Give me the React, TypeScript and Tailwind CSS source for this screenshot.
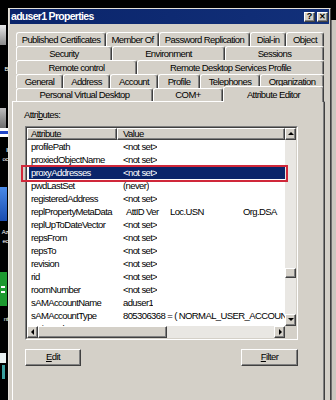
import React from "react";

const FONT = "font-['Liberation_Sans',Arial,sans-serif]";
const T = "text-[9.5px] tracking-[-0.6px]";

const raised =
  "border border-t-white border-l-white border-r-[#404040] border-b-[#404040] shadow-[inset_-1px_-1px_0_#808080]";

const tabRows: { label: string; w: string; active?: boolean }[][] = [
  [
    { label: "Published Certificates", w: "w-[90px]" },
    { label: "Member Of", w: "w-[53px]" },
    { label: "Password Replication", w: "w-[91px]" },
    { label: "Dial-in", w: "w-[36px]" },
    { label: "Object", w: "w-[38px]" },
  ],
  [
    { label: "Security", w: "w-[96px]" },
    { label: "Environment", w: "w-[113px]" },
    { label: "Sessions", w: "w-[99px]" },
  ],
  [
    { label: "Remote control", w: "w-[121px]" },
    { label: "Remote Desktop Services Profile", w: "w-[187px]" },
  ],
  [
    { label: "General", w: "w-[47px]" },
    { label: "Address", w: "w-[47px]" },
    { label: "Account", w: "w-[48px]" },
    { label: "Profile", w: "w-[42px]" },
    { label: "Telephones", w: "w-[60px]" },
    { label: "Organization", w: "w-[64px]" },
  ],
  [
    { label: "Personal Virtual Desktop", w: "w-[137px]" },
    { label: "COM+", w: "w-[70px]" },
    { label: "Attribute Editor", w: "w-[101px]", active: true },
  ],
];

type Row = { name: string; value?: string; selected?: boolean; meta?: boolean };
const rows: Row[] = [
  { name: "profilePath" },
  { name: "proxiedObjectName" },
  { name: "proxyAddresses", selected: true },
  { name: "pwdLastSet", value: "(never)" },
  { name: "registeredAddress" },
  { name: "replPropertyMetaData", meta: true },
  { name: "replUpToDateVector" },
  { name: "repsFrom" },
  { name: "repsTo" },
  { name: "revision" },
  { name: "rid" },
  { name: "roomNumber" },
  { name: "sAMAccountName", value: "aduser1" },
  { name: "sAMAccountType", value: "805306368 = ( NORMAL_USER_ACCOUNT )" },
  { name: "scriptPath" },
];

function Arrow({ dir }: { dir: "up" | "down" | "left" | "right" }) {
  const pts =
    dir === "up"
      ? "1,5 4,2 7,5"
      : dir === "down"
      ? "1,2 4,5 7,2"
      : dir === "left"
      ? "5,1 2,4 5,7"
      : "3,1 6,4 3,7";
  return (
    <svg width="8" height="8" viewBox="0 0 8 8">
      <polygon points={pts} fill="#000" />
    </svg>
  );
}

function ScrollBtn({ dir }: { dir: "up" | "down" | "left" | "right" }) {
  return (
    <div className={`w-[11px] h-[12px] shrink-0 bg-[#d4d0c8] flex items-center justify-center ${raised}`}>
      <Arrow dir={dir} />
    </div>
  );
}

function LeftStrip() {
  return (
    <div className="w-[8px] shrink-0 flex flex-col overflow-hidden text-[6px] leading-[9px] tracking-[-0.4px] text-white">
      <div className="h-[25px] shrink-0" />
      <div className="h-[20px] w-[6px] shrink-0 bg-gradient-to-b from-[#e8e8e8] to-[#8a8a8a]" />
      <div className="h-[20px] shrink-0" />
      <div className="h-[9px] shrink-0 flex justify-end">B</div>
      <div className="h-[34px] shrink-0" />
      <div className="h-[20px] w-[6px] shrink-0 bg-gradient-to-b from-[#bdbdbd] to-[#6e6e6e]" />
      <div className="h-[3px] shrink-0 bg-white" />
      <div className="h-[3px] shrink-0 bg-[#2146c8]" />
      <div className="h-[3px] shrink-0 bg-white" />
      <div className="h-[9px] shrink-0" />
      <div className="h-[9px] shrink-0 flex justify-end">ll</div>
      <div className="h-[9px] shrink-0 flex justify-end">oc</div>
      <div className="h-[23px] shrink-0" />
      <div className="h-[34px] w-[7px] shrink-0 bg-gradient-to-b from-[#4a8ae8] to-[#1a4cb0]" />
      <div className="h-[7px] shrink-0" />
      <div className="h-[9px] shrink-0 flex justify-end">Az</div>
      <div className="h-[9px] shrink-0 flex justify-end">ec</div>
      <div className="h-[26px] shrink-0" />
      <div className="h-[34px] w-[7px] shrink-0 bg-[#1e9a30] flex flex-col justify-center gap-[3px] pl-px">
        <div className="h-[2px] w-[4px] bg-white" />
        <div className="h-[2px] w-[4px] bg-white" />
      </div>
      <div className="h-[9px] shrink-0" />
      <div className="h-[9px] shrink-0 flex justify-end">nt</div>
      <div className="h-[29px] shrink-0" />
      <div className="h-[30px] w-[6px] shrink-0 flex flex-col gap-[2px]">
        <div className="h-[10px] bg-[#e8f0f0]" />
        <div className="h-[14px] w-[3px] ml-[2px] bg-[#3aa0a0]" />
      </div>
    </div>
  );
}

export default function App() {
  return (
    <div className={`relative w-[336px] h-[400px] bg-black flex overflow-hidden ${FONT} text-black`}>
      <LeftStrip />
      <div className="w-[323px] shrink-0 flex flex-col">
        <div className="h-[8px] shrink-0" />
        <div className="flex-1 flex flex-col bg-[#d4d0c8] border-l border-t border-r border-l-[#e4e1da] border-t-[#e4e1da] border-r-[#404040] px-px">
          {/* Title bar */}
          <div className="h-[15px] shrink-0 bg-gradient-to-r from-[#0a246a] to-[#12307a] flex items-center justify-between pl-[1px] pr-[1px]">
            <span className="text-white font-bold text-[10.5px] tracking-[-0.7px] leading-none">aduser1 Properties</span>
            <div className="flex gap-[2px]">
              <div className={`w-[11px] h-[10px] bg-[#d4d0c8] flex items-center justify-center text-[9px] font-bold leading-none ${raised}`}>?</div>
              <div className={`w-[11px] h-[10px] bg-[#d4d0c8] flex items-center justify-center text-[8px] font-bold leading-none ${raised}`}>✕</div>
            </div>
          </div>

          {/* Tabs */}
          <div className="pt-[8px] flex flex-col">
            {tabRows.map((row, ri) => (
              <div
                key={ri}
                className={`ml-[6px] w-[308px] flex items-end ${ri === 4 ? "h-[13px]" : "h-[14px]"}`}
              >
                {row.map((t) =>
                  t.active ? (
                    <div
                      key={t.label}
                      className={`${t.w} h-[16px] -mb-px relative z-10 bg-[#d4d0c8] flex items-start justify-center pt-[2px] ${T} leading-[11px] border-t border-l border-r border-t-white border-l-white border-r-[#404040] rounded-t-[3px] shadow-[inset_-1px_0_0_#808080]`}
                    >
                      {t.label}
                    </div>
                  ) : (
                    <div
                      key={t.label}
                      className={`${t.w} h-full flex items-center justify-center ${T} leading-none whitespace-nowrap border-t border-l border-r border-t-white border-l-white border-r-[#404040] rounded-t-[3px] shadow-[inset_-1px_0_0_#808080]`}
                    >
                      {t.label}
                    </div>
                  )
                )}
              </div>
            ))}
          </div>

          {/* Panel */}
          <div className="ml-[2px] w-[313px] flex-1 flex flex-col border-t border-l border-r border-t-white border-l-white border-r-[#404040] shadow-[inset_-1px_0_0_#808080] pt-[7px] pl-[11px]">
            <div className={`h-[12px] ${T} leading-[12px]`}>
              Attri<span className="underline">b</span>utes:
            </div>
            <div className="mt-[5px] ml-px w-[273px] h-[214px] border border-t-[#808080] border-l-[#808080] border-r-white border-b-white">
              <div className="w-full h-full border border-t-[#404040] border-l-[#404040] border-r-[#d4d0c8] border-b-[#d4d0c8] bg-white flex">
                {/* main */}
                <div className="w-[258px] flex flex-col">
                  <div className={`h-[12px] shrink-0 flex ${T} leading-none`}>
                    <div className={`w-[90px] bg-[#d4d0c8] flex items-center pl-[3px] ${raised}`}>Attribute</div>
                    <div className={`flex-1 bg-[#d4d0c8] flex items-center pl-[5px] ${raised}`}>Value</div>
                  </div>
                  <div className="flex-1 overflow-hidden">
                    {rows.map((r) => (
                      <div
                        key={r.name}
                        className={`h-[13px] ml-[2px] flex items-center ${T} leading-[13px] whitespace-nowrap ${
                          r.selected ? "bg-[#0a246a] text-white" : ""
                        }`}
                      >
                        <div className="w-[88px] pl-[2px] shrink-0">{r.name}</div>
                        {r.meta ? (
                          <div className="flex pl-[9px]">
                            <span className="w-[20px]">AttID</span>
                            <span className="w-[24px]">Ver</span>
                            <span className="w-[73px]">Loc.USN</span>
                            <span>Org.DSA</span>
                          </div>
                        ) : (
                          <div className="pl-[6px] overflow-hidden">{r.value ?? "<not set>"}</div>
                        )}
                      </div>
                    ))}
                  </div>
                  <div className="h-[12px] shrink-0 flex bg-[#e9e7e3]">
                    <ScrollBtn dir="left" />
                    <div className={`w-[129px] bg-[#d4d0c8] ${raised}`} />
                    <div className="flex-1" />
                    <ScrollBtn dir="right" />
                  </div>
                </div>
                {/* vertical scrollbar */}
                <div className="w-[11px] flex flex-col bg-[#e9e7e3]">
                  <ScrollBtn dir="up" />
                  <div className="flex-1 flex flex-col">
                    <div className="h-[128px] shrink-0" />
                    <div className={`h-[10px] bg-[#d4d0c8] ${raised}`} />
                  </div>
                  <ScrollBtn dir="down" />
                  <div className="h-[12px] shrink-0 bg-[#d4d0c8]" />
                </div>
              </div>
            </div>
            <div className={`mt-[9px] ml-px w-[273px] flex justify-between ${T}`}>
              <div className={`w-[56px] h-[17px] bg-[#d4d0c8] flex items-center justify-center ${raised}`}>
                <span><span className="underline">E</span>dit</span>
              </div>
              <div className={`w-[57px] h-[17px] bg-[#d4d0c8] flex items-center justify-center ${raised}`}>
                <span><span className="underline">F</span>ilter</span>
              </div>
            </div>
          </div>
        </div>
      </div>
      <div className="w-[5px] shrink-0 flex flex-col">
        <div className="h-[20px] shrink-0" />
        <div className="flex-1 bg-[#cbc7bf] border-l border-l-[#707070]" />
      </div>

      {/* red highlight annotation */}
      <div className="absolute left-[21px] top-[165px] w-[267px] h-[17px] border-2 border-[#d0283a] pointer-events-none" />
    </div>
  );
}
